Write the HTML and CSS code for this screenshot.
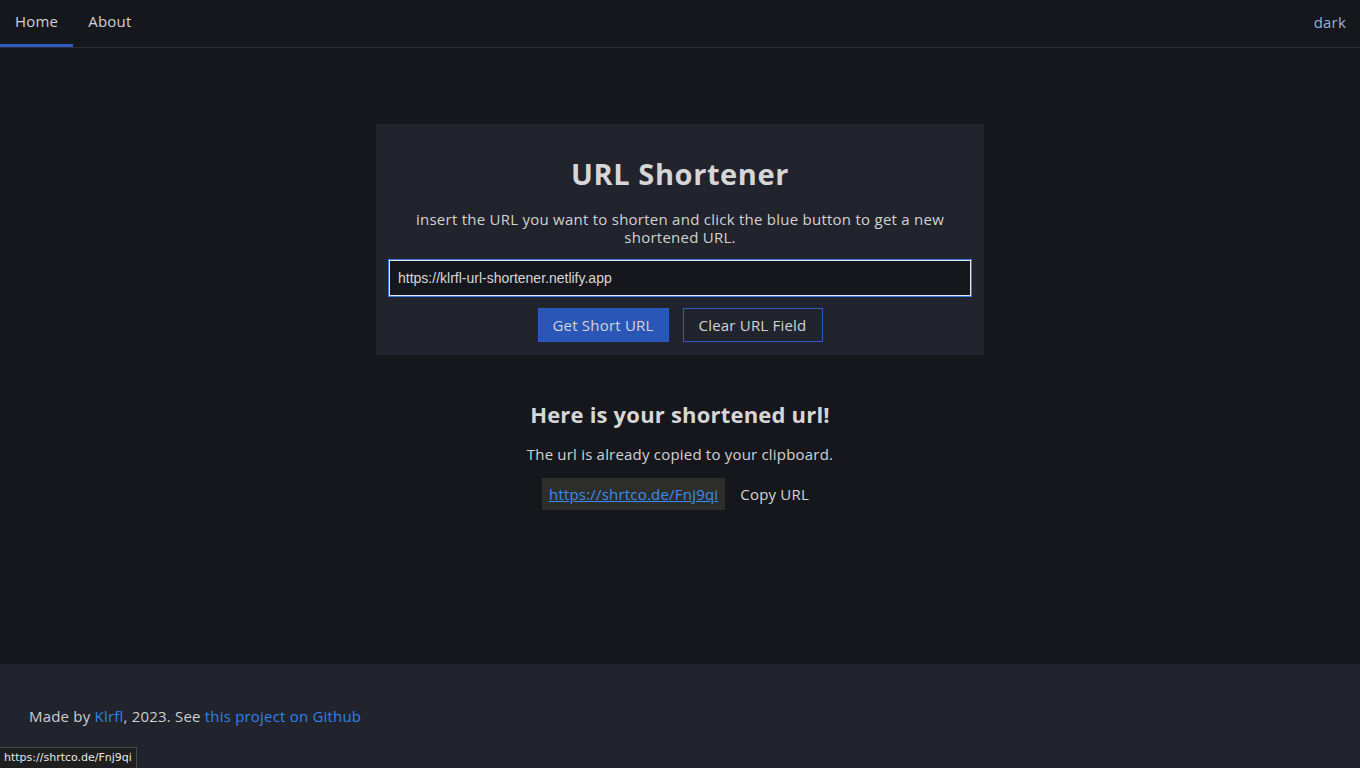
FILE: index.html
```html
<!DOCTYPE html>
<html lang="en">
<head>
<meta charset="utf-8">
<title>URL Shortener</title>
<link rel="stylesheet" href="styles.css">
</head>
<body>
<nav class="nav">
  <div class="nav-links">
    <a class="nav-link active" href="#">Home</a>
    <a class="nav-link" href="#">About</a>
  </div>
  <a class="theme" href="#">dark</a>
</nav>
<main class="main">
  <section class="card">
    <h1 class="title">URL Shortener</h1>
    <p class="desc">insert the URL you want to shorten and click the blue button to get a new shortened URL.</p>
    <div class="input-wrap"><input class="url-input" type="text" value="https://klrfl-url-shortener.netlify.app"></div>
    <div class="actions">
      <button class="btn btn-primary">Get Short URL</button>
      <button class="btn btn-outline">Clear URL Field</button>
    </div>
  </section>
  <section class="result">
    <h2 class="result-title">Here is your shortened url!</h2>
    <p class="result-text">The url is already copied to your clipboard.</p>
    <div class="result-row">
      <a class="short-link" href="#">https://shrtco.de/Fnj9qi</a>
      <button class="copy-btn">Copy URL</button>
    </div>
  </section>
</main>
<footer class="footer">
  <p>Made by <a href="#">Klrfl</a>, 2023. See <a href="#">this project on Github</a></p>
</footer>
<div class="status">https://shrtco.de/Fnj9qi</div>
</body>
</html>
```
FILE: styles.css
```css
* { box-sizing: border-box; }
html, body { margin: 0; padding: 0; }
body {
  background: #16171d;
  color: #d2d2d2;
  font-family: "Open Sans", "DejaVu Sans", sans-serif;
  font-size: 15px;
  letter-spacing: 0.2px;
}
a { text-decoration: none; }
.nav {
  height: 48px;
  border-bottom: 1px solid #2e2f35;
  display: flex;
  justify-content: space-between;
  align-items: stretch;
}
.nav-links { display: flex; }
.nav-link {
  color: #cfd2d8;
  padding: 0 15px;
  display: flex;
  align-items: center;
  padding-bottom: 2px;
  border-bottom: 3px solid transparent;
}
.nav-link.active { border-bottom-color: #2d5bc4; }
.theme {
  color: #8fb3d9;
  display: flex;
  align-items: center;
  padding: 0 14px 3px 0;
}
.main {
  min-height: 616px;
  padding-top: 76px;
  display: flex;
  flex-direction: column;
  align-items: center;
}
.card {
  width: 608px;
  background: #21232d;
  padding: 30px 13px 13px;
  text-align: center;
}
.title {
  margin: 0;
  font-size: 29px;
  font-weight: 700;
  color: #d6d6d6;
  line-height: 40px;
  letter-spacing: 0.6px;
}
.desc {
  margin: 16px 20px 14px;
  line-height: 18px;
  font-size: 15px;
  color: #d2d2d2;
  letter-spacing: 0.25px;
}
.input-wrap { display: flex; }
.url-input {
  width: 100%;
  height: 36px;
  background: #16171d;
  border: 1px solid #dfe6f0;
  outline: 1px solid #3a78e0;
  color: #d8d8d8;
  font-family: "Liberation Sans", "Open Sans", sans-serif;
  font-size: 14px;
  letter-spacing: 0;
  padding: 0 8px;
}
.actions {
  display: flex;
  justify-content: center;
  gap: 14px;
  margin-top: 12px;
}
.btn {
  height: 34px;
  font-family: inherit;
  font-size: 15px;
  letter-spacing: 0.2px;
  color: #d4d4d4;
  padding: 0 10px;
  border: 1px solid #2d5bc4;
  cursor: pointer;
}
.btn-primary { background: #2a56b8; width: 131px; }
.btn-outline { background: transparent; width: 140px; }
.result {
  margin-top: 44px;
  text-align: center;
}
.result-title {
  margin: 0;
  font-size: 22px;
  font-weight: 700;
  line-height: 30px;
  color: #d6d6d6;
}
.result-text {
  margin: 15px 0 14px;
  line-height: 20px;
  color: #d2d2d2;
}
.result-row {
  display: flex;
  justify-content: center;
  align-items: center;
  gap: 6px;
}
.short-link {
  background: #2d2e2a;
  color: #3b8cf0;
  text-decoration: underline;
  height: 32px;
  padding: 0 7px;
  display: flex;
  align-items: center;
}
.copy-btn {
  background: transparent;
  border: 0;
  color: #d4d4d4;
  font-family: inherit;
  font-size: 15px;
  letter-spacing: 0.2px;
  padding: 0 9px;
  height: 32px;
}
.footer {
  background: #21232d;
  height: 104px;
  padding: 0 29px;
  display: flex;
  align-items: center;
}
.footer p { margin: 0; color: #cfcfcf; }
.footer a { color: #2f82e8; }
.status {
  position: fixed;
  left: 0;
  bottom: 0;
  height: 21px;
  padding: 0 4px;
  background: #1f1f1f;
  border: 1px solid #4a4a4a;
  border-left: 0;
  border-bottom: 0;
  color: #e6e6e6;
  font-family: "DejaVu Sans", sans-serif;
  font-size: 11px;
  letter-spacing: 0;
  line-height: 20px;
}
```
